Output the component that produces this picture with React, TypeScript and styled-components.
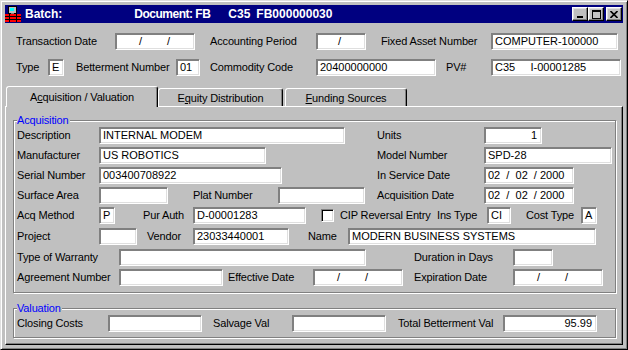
import React from 'react';
import styled, { createGlobalStyle } from 'styled-components';

const Global = createGlobalStyle`
  html, body { margin: 0; padding: 0; background: #c0c0c0; }
  body { font-family: "Liberation Sans", Arial, sans-serif; font-size: 11px; color: #000; }
  * { box-sizing: border-box; }
`;

const Window = styled.div`
  width: 628px;
  height: 350px;
  background: #c0c0c0;
  border: 1px solid;
  border-color: #dfdfdf #000 #000 #dfdfdf;
  box-shadow: inset 1px 1px #fff, inset -1px -1px #808080;
  padding: 4px 4px 4px 4px;
  display: flex;
  flex-direction: column;
`;

const TitleBar = styled.div`
  flex: none;
  height: 18px;
  background: #000080;
  display: flex;
  align-items: center;
  color: #fff;
  font-weight: bold;
  font-size: 12px;
  padding-right: 1px;
`;

const TitleText = styled.span<{ $ml: number; $ls?: number }>`
  margin-left: ${p => p.$ml}px;
  letter-spacing: ${p => p.$ls ?? 0}px;
  white-space: pre;
`;

const Controls = styled.div`
  margin-left: auto;
  display: flex;
  align-items: center;
`;

const CtlButton = styled.div<{ $ml?: number }>`
  width: 16px;
  height: 14px;
  margin-left: ${p => p.$ml ?? 0}px;
  background: #c0c0c0;
  border: 1px solid;
  border-color: #fff #000 #000 #fff;
  box-shadow: inset -1px -1px #808080, inset 1px 1px #dfdfdf;
  display: flex;
  align-items: center;
  justify-content: center;
`;

const Body = styled.div`
  flex: 1;
  display: flex;
  flex-direction: column;
`;

const TopForm = styled.div`
  display: flex;
  flex-direction: column;
  gap: 9px;
  margin-top: 10px;
  padding-left: 11px;
`;

const Row = styled.div<{ $mt?: number }>`
  display: flex;
  align-items: center;
  height: 17px;
  margin-top: ${p => p.$mt ?? 0}px;
`;

const Label = styled.span<{ $w: number; $ml?: number }>`
  flex: none;
  width: ${p => p.$w}px;
  margin-left: ${p => p.$ml ?? 0}px;
  white-space: nowrap;
  line-height: 13px;
  letter-spacing: -0.15px;
`;

const Field = styled.div<{ $w: number; $ml?: number; $right?: boolean }>`
  flex: none;
  width: ${p => p.$w}px;
  height: 17px;
  margin-left: ${p => p.$ml ?? 0}px;
  background: #fff;
  border: 1px solid;
  border-color: #808080 #fff #fff #808080;
  box-shadow: inset 1px 1px #808080, inset -1px -1px #dfdfdf;
  padding: 0 ${p => (p.$right ? '4px' : '0')} 0 3px;
  line-height: 15px;
  text-align: ${p => (p.$right ? 'right' : 'left')};
  white-space: pre;
  overflow: hidden;
`;

const Slash = styled.span<{ $ml: number }>`
  display: inline-block;
  margin-left: ${p => p.$ml}px;
`;

const Check = styled.div<{ $ml?: number }>`
  flex: none;
  width: 13px;
  height: 13px;
  margin-left: ${p => p.$ml ?? 0}px;
  background: #fff;
  border: 1px solid;
  border-color: #808080 #fff #fff #808080;
  box-shadow: inset 1px 1px #000, inset -1px -1px #dfdfdf;
`;

const TabStrip = styled.div`
  display: flex;
  align-items: flex-end;
  height: 20px;
  margin-top: 10px;
  padding-left: 1px;
`;

const Tab = styled.div<{ $w: number; $active?: boolean; $ml?: number }>`
  position: relative;
  z-index: ${p => (p.$active ? 2 : 1)};
  flex: none;
  width: ${p => p.$w}px;
  height: ${p => (p.$active ? 21 : 18)}px;
  margin-left: ${p => p.$ml ?? 0}px;
  margin-bottom: ${p => (p.$active ? -1 : 0)}px;
  background: #c0c0c0;
  border: 1px solid;
  border-bottom: none;
  border-color: #fff #000 transparent #fff;
  border-radius: 3px 3px 0 0;
  box-shadow: inset -1px 0 #808080;
  display: flex;
  align-items: center;
  justify-content: center;
  letter-spacing: -0.15px;
  padding-bottom: ${p => (p.$active ? 1 : 0)}px;
  white-space: nowrap;
`;

const Panel = styled.div`
  flex: 1;
  border: 1px solid;
  border-color: #fff #000 #000 #fff;
  box-shadow: inset -1px -1px #808080;
  padding: 7px 5px 0 7px;
  display: flex;
  flex-direction: column;
`;

const Group = styled.fieldset<{ $mt?: number }>`
  margin: ${p => p.$mt ?? 0}px 1px 0 0;
  padding: 0 0 ${p => (p.$mt ? 5 : 6)}px 3px;
  min-width: 0;
  border: 1px solid #808080;
  box-shadow: inset 1px 1px #fff, 1px 1px #fff;
  display: flex;
  flex-direction: column;
`;

const Legend = styled.legend`
  padding: 0 1px 0 0;
  margin-left: 0;
  color: #0000ff;
  line-height: 13px;
  font-size: 11px;
  background: #c0c0c0;
  letter-spacing: -0.15px;
`;

const AppIcon = () => (
  <svg width="16" height="16" viewBox="0 0 16 16" style={{ flex: 'none' }}>
    <rect x="0" y="8" width="16" height="8" fill="#ff0000" />
    <rect x="0" y="10" width="16" height="1" fill="#000" />
    <rect x="0" y="13" width="16" height="1" fill="#000" />
    <rect x="4" y="8" width="1" height="8" fill="#000" />
    <rect x="11" y="8" width="1" height="8" fill="#000" />
    <rect x="3" y="0" width="9" height="8" fill="#000" />
    <rect x="4" y="1" width="7" height="6" fill="#c0c0c0" />
    <rect x="5" y="2" width="4" height="3" fill="#00ffff" />
    <rect x="6" y="7" width="3" height="1" fill="#808080" />
  </svg>
);

const MinGlyph = () => (
  <svg width="8" height="8" viewBox="0 0 8 8">
    <rect x="1" y="6" width="6" height="2" fill="#000" />
  </svg>
);

const MaxGlyph = () => (
  <svg width="9" height="9" viewBox="0 0 9 9">
    <rect x="0.5" y="0.5" width="8" height="8" fill="none" stroke="#000" />
    <rect x="0" y="0" width="9" height="2" fill="#000" />
  </svg>
);

const CloseGlyph = () => (
  <svg width="8" height="7" viewBox="0 0 8 7">
    <path d="M0.5 0 L7.5 7 M7.5 0 L0.5 7" stroke="#000" strokeWidth="1.6" />
  </svg>
);

const EmptyDate = ({ w, ml, a = 20, b = 25 }: { w: number; ml?: number; a?: number; b?: number }) => (
  <Field $w={w} $ml={ml}>
    <Slash $ml={a}>/</Slash>
    <Slash $ml={b}>/</Slash>
  </Field>
);

export default function App() {
  return (
    <>
      <Global />
      <Window>
        <TitleBar>
          <AppIcon />
          <TitleText $ml={4}>Batch:</TitleText>
          <TitleText $ml={72} $ls={-0.5}>Document: FB</TitleText>
          <TitleText $ml={18}>C35</TitleText>
          <TitleText $ml={6}>FB000000030</TitleText>
          <Controls>
            <CtlButton><MinGlyph /></CtlButton>
            <CtlButton><MaxGlyph /></CtlButton>
            <CtlButton $ml={2}><CloseGlyph /></CtlButton>
          </Controls>
        </TitleBar>
        <Body>
          <TopForm>
            <Row>
              <Label $w={99}>Transaction Date</Label>
              <EmptyDate w={80} />
              <Label $w={106} $ml={15}>Accounting Period</Label>
              <Field $w={50}><Slash $ml={18}>/</Slash></Field>
              <Label $w={110} $ml={15}>Fixed Asset Number</Label>
              <Field $w={127}>COMPUTER-100000</Field>
            </Row>
            <Row>
              <Label $w={32}>Type</Label>
              <Field $w={16}>E</Field>
              <Label $w={100} $ml={12}>Betterment Number</Label>
              <Field $w={24}>01</Field>
              <Label $w={106} $ml={10}>Commodity Code</Label>
              <Field $w={120}>20400000000</Field>
              <Label $w={45} $ml={10}>PV#</Label>
              <Field $w={130}>{'C35     I-00001285'}</Field>
            </Row>
          </TopForm>
          <TabStrip>
            <Tab $w={152} $active>A<u>c</u>quisition / Valuation</Tab>
            <Tab $w={125}>E<u>q</u>uity Distribution</Tab>
            <Tab $w={122} $ml={2}><u>F</u>unding Sources</Tab>
          </TabStrip>
          <Panel>
            <Group>
              <Legend>Acquisition</Legend>
              <Row>
                <Label $w={82}>Description</Label>
                <Field $w={246}>INTERNAL MODEM</Field>
                <Label $w={107} $ml={32}>Units</Label>
                <Field $w={58} $right>1</Field>
              </Row>
              <Row $mt={3}>
                <Label $w={82}>Manufacturer</Label>
                <Field $w={167}>US ROBOTICS</Field>
                <Label $w={107} $ml={111}>Model Number</Label>
                <Field $w={128}>SPD-28</Field>
              </Row>
              <Row $mt={3}>
                <Label $w={82}>Serial Number</Label>
                <Field $w={183}>003400708922</Field>
                <Label $w={107} $ml={95}>In Service Date</Label>
                <Field $w={90}>{'02  /  02  / 2000'}</Field>
              </Row>
              <Row $mt={3}>
                <Label $w={82}>Surface Area</Label>
                <Field $w={69} />
                <Label $w={85} $ml={25}>Plat Number</Label>
                <Field $w={87} />
                <Label $w={107} $ml={12}>Acquisition Date</Label>
                <Field $w={90}>{'02  /  02  / 2000'}</Field>
              </Row>
              <Row $mt={3}>
                <Label $w={82}>Acq Method</Label>
                <Field $w={16}>P</Field>
                <Label $w={50} $ml={28}>Pur Auth</Label>
                <Field $w={113}>D-00001283</Field>
                <Check $ml={15} />
                <Label $w={97} $ml={6}>CIP Reversal Entry</Label>
                <Label $w={50}>Ins Type</Label>
                <Field $w={24}>CI</Field>
                <Label $w={55} $ml={15}>Cost Type</Label>
                <Field $w={16}>A</Field>
              </Row>
              <Row $mt={4}>
                <Label $w={82}>Project</Label>
                <Field $w={38} />
                <Label $w={46} $ml={10}>Vendor</Label>
                <Field $w={96}>23033440001</Field>
                <Label $w={40} $ml={19}>Name</Label>
                <Field $w={248}>MODERN BUSINESS SYSTEMS</Field>
              </Row>
              <Row $mt={4}>
                <Label $w={102}>Type of Warranty</Label>
                <Field $w={247} />
                <Label $w={99} $ml={48}>Duration in Days</Label>
                <Field $w={40} />
              </Row>
              <Row $mt={3}>
                <Label $w={102}>Agreement Number</Label>
                <Field $w={104} />
                <Label $w={85} $ml={5}>Effective Date</Label>
                <EmptyDate w={90} />
                <Label $w={99} $ml={11}>Expiration Date</Label>
                <EmptyDate w={90} />
              </Row>
            </Group>
            <Group $mt={9}>
              <Legend>Valuation</Legend>
              <Row>
                <Label $w={91}>Closing Costs</Label>
                <Field $w={94} />
                <Label $w={79} $ml={11}>Salvage Val</Label>
                <Field $w={94} />
                <Label $w={105} $ml={12}>Total Betterment Val</Label>
                <Field $w={94} $right>95.99</Field>
              </Row>
            </Group>
          </Panel>
        </Body>
      </Window>
    </>
  );
}
